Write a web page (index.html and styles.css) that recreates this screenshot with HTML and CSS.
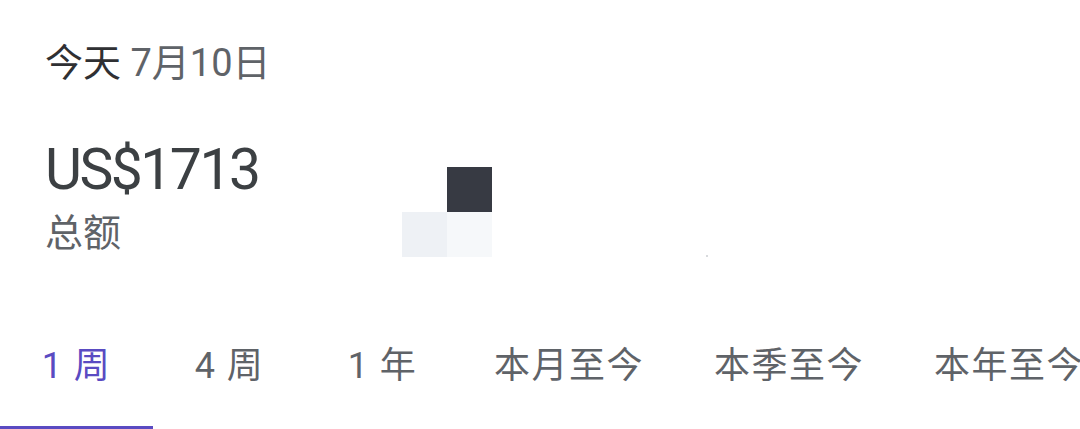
FILE: index.html
```html
<!DOCTYPE html>
<html lang="zh-CN">
<head>
<meta charset="utf-8">
<link rel="stylesheet" href="styles.css">
</head>
<body>
<div class="page">
  <div class="date"><span class="today">今天</span> 7月10日</div>
  <div class="summary">
    <div class="totals">
      <div class="amount">US$1713</div>
      <div class="label">总额</div>
    </div>
    <div class="chart">
      <div class="cell c-dark" style="left:45px;top:0"></div>
      <div class="cell c-light1" style="left:0;top:45px"></div>
      <div class="cell c-light2" style="left:45px;top:45px"></div>
      <div class="dot" style="left:304px;top:88px"></div>
    </div>
  </div>
  <div class="tabs">
    <div class="tab active">1 周</div>
    <div class="tab">4 周</div>
    <div class="tab">1 年</div>
    <div class="tab">本月至今</div>
    <div class="tab">本季至今</div>
    <div class="tab">本年至今</div>
  </div>
</div>
</body>
</html>
```

FILE: styles.css
```css
html, body {
  margin: 0;
  padding: 0;
  background: #ffffff;
  overflow: hidden;
}
.page {
  width: 1080px;
  height: 429px;
  font-family: Roboto, "Noto Sans CJK SC", sans-serif;
  color: #5f6368;
  position: relative;
  overflow: hidden;
}
.date {
  padding: 38px 0 0 45px;
  font-size: 38px;
  line-height: 50px;
  color: #5f6368;
}
.today {
  color: #2f3033;
}
.summary {
  display: flex;
  padding: 0 0 0 45px;
  margin-top: 47px;
}
.totals {
  display: flex;
  flex-direction: column;
  width: 357px;
}
.amount {
  font-size: 57px;
  line-height: 70px;
  color: #3c4043;
  letter-spacing: -2.5px;
}
.label {
  margin-top: 7px;
  font-size: 38px;
  line-height: 42px;
  color: #5f6368;
}
.chart {
  position: relative;
  margin-top: 32px;
  width: 400px;
  height: 90px;
}
.cell {
  position: absolute;
  width: 45px;
  height: 45px;
}
.c-dark { background: #373a43; }
.c-light1 { background: #eef1f5; }
.c-light2 { background: #f6f8fa; }
.dot {
  position: absolute;
  width: 2px;
  height: 2px;
  background: #d8dadd;
}
.tabs {
  position: absolute;
  left: 0;
  bottom: 0;
  display: flex;
}
.tab {
  min-width: 153px;
  padding: 0 35px;
  height: 88px;
  font-size: 36px;
  line-height: 50px;
  letter-spacing: 1.5px;
  text-align: center;
  color: #5f6368;
  white-space: nowrap;
  border-bottom: 3px solid transparent;
  box-sizing: border-box;
  flex: none;
}
.tab.active {
  color: #5a4bc2;
  border-bottom-color: #5a4bc2;
}
```
